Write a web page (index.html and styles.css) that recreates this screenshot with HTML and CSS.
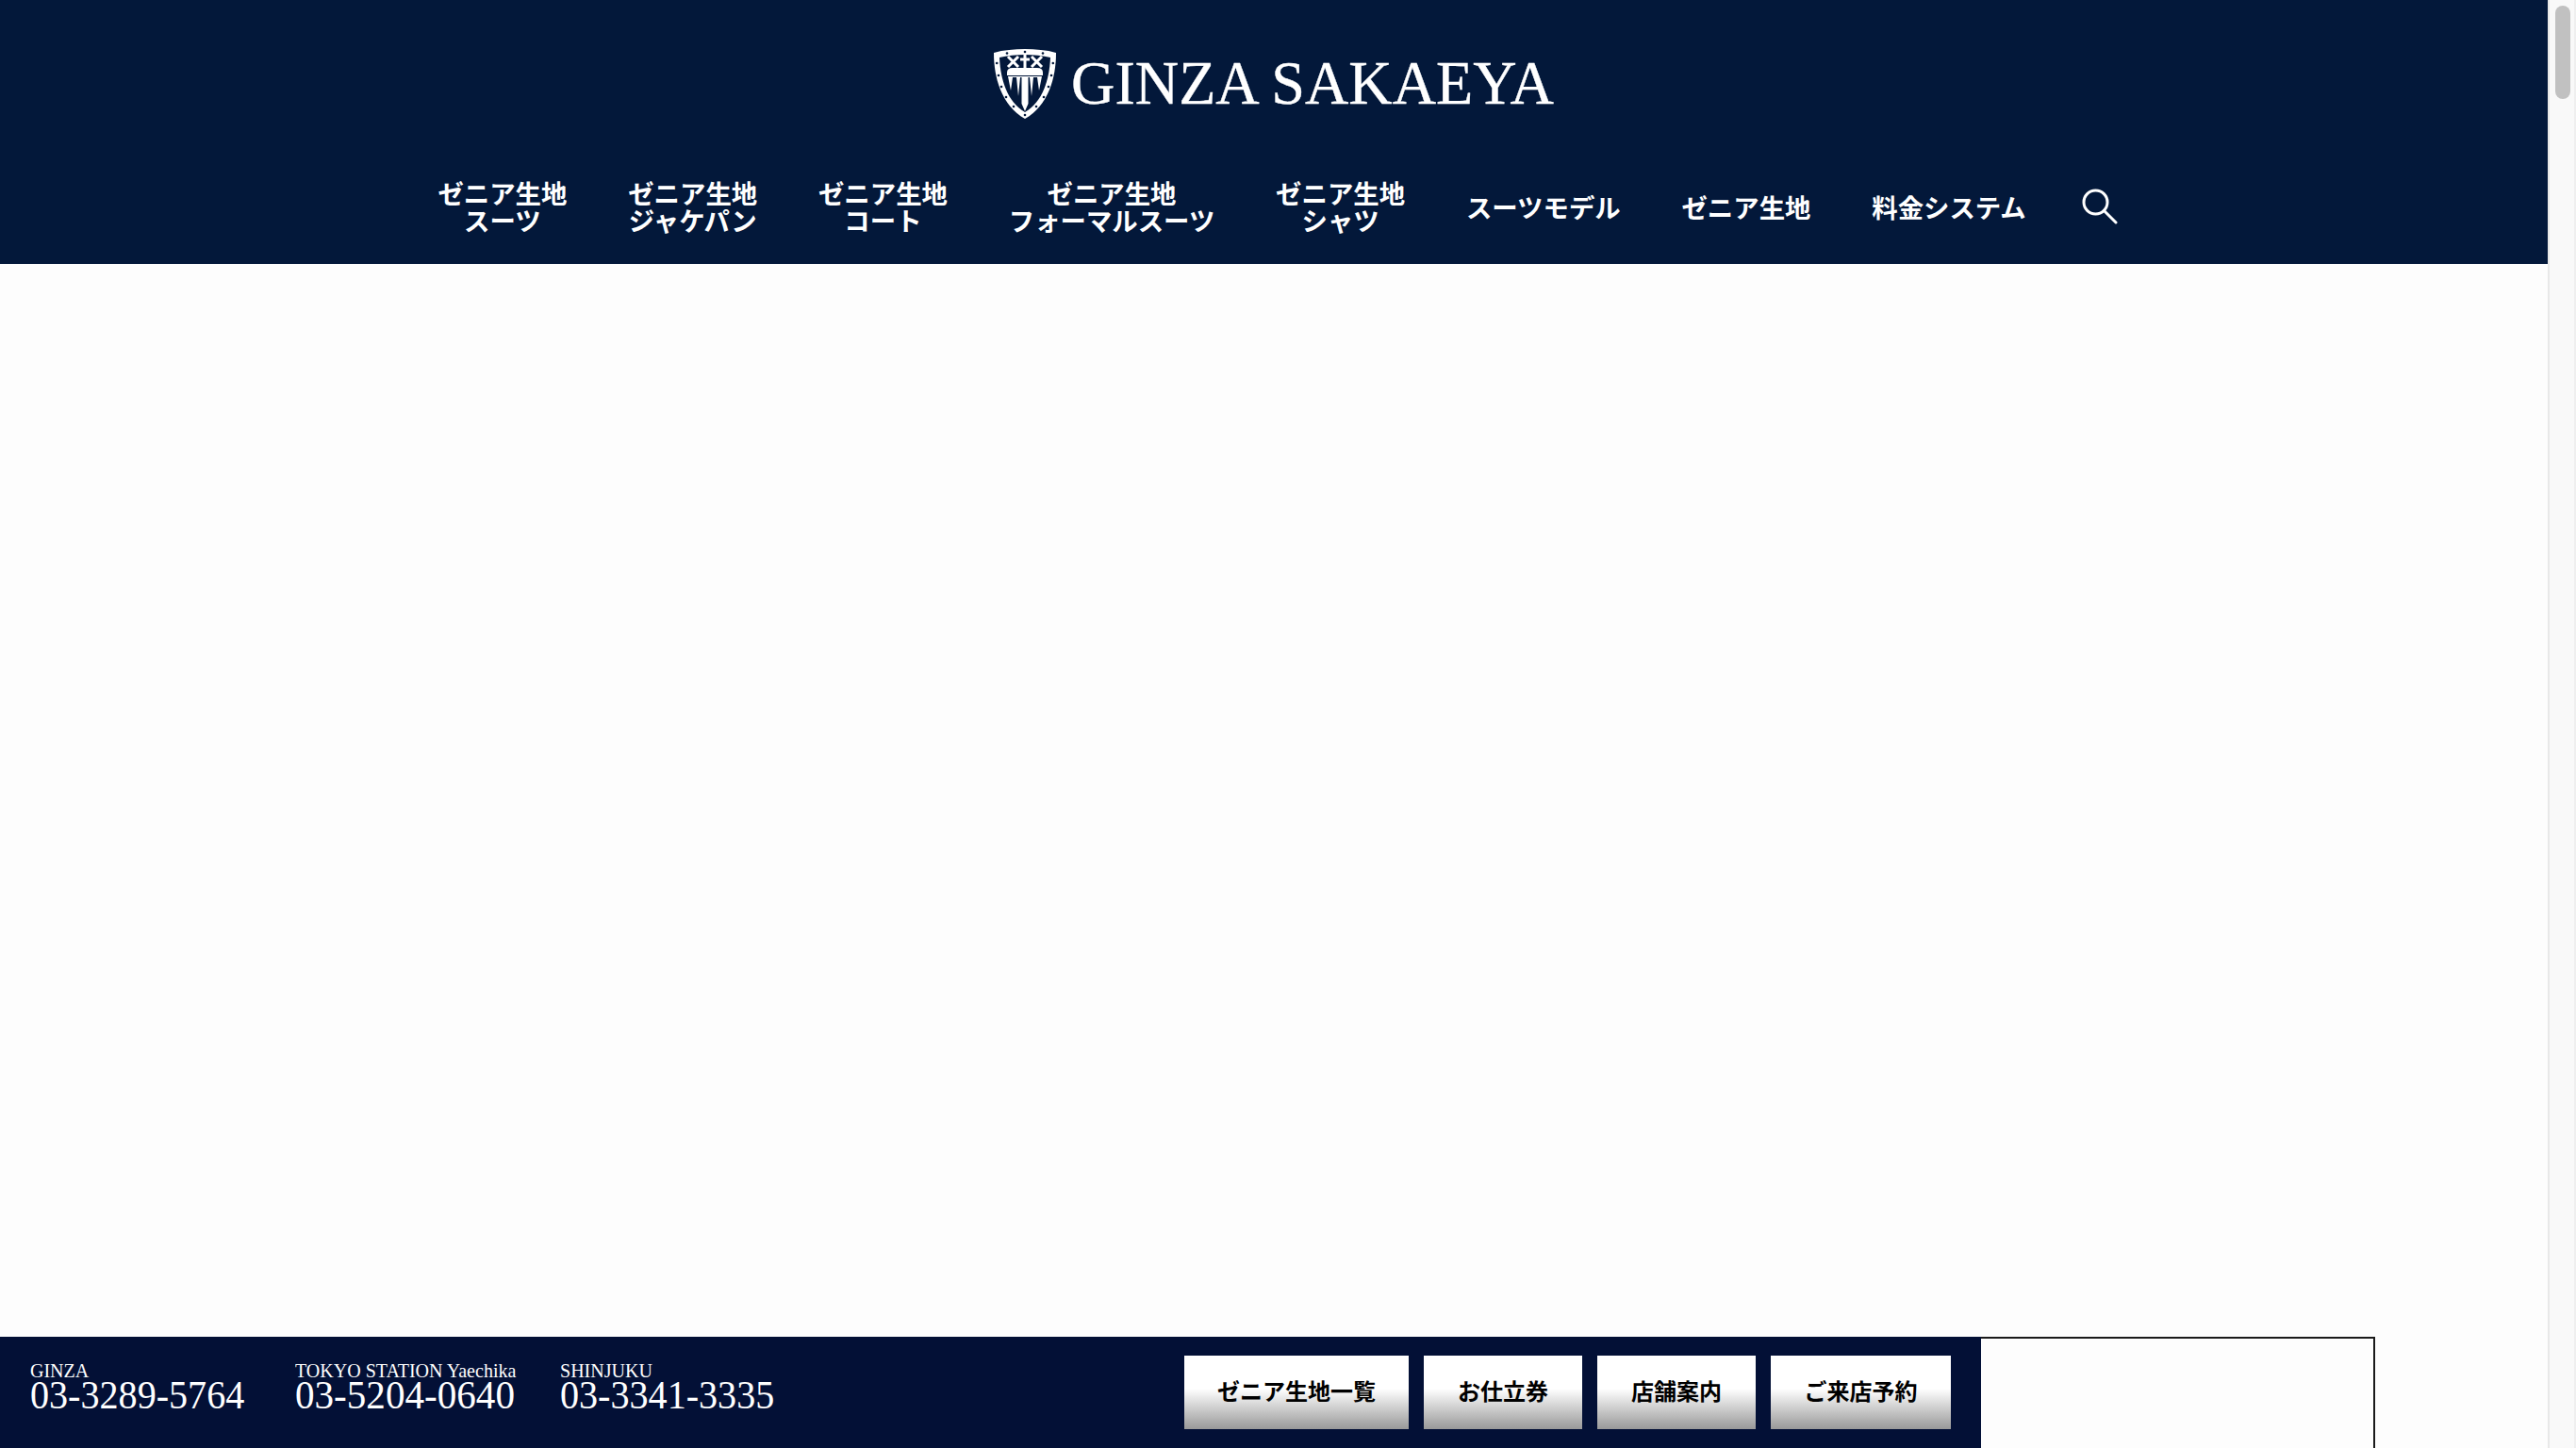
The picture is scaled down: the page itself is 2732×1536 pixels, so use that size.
FILE: index.html
```html
<!DOCTYPE html>
<html lang="ja">
<head>
<meta charset="utf-8">
<title>GINZA SAKAEYA</title>
<link rel="stylesheet" href="styles.css">
</head>
<body>
<div class="page">
  <div class="main">
    <header class="header">
      <a class="logo" href="#">
        <svg class="crest" viewBox="0 0 66 74" aria-hidden="true">
          <path class="crest-outer" d="M33 0C44 0 56 1 66 4C66 30 58 60 33 74C8 60 0 30 0 4C10 1 22 0 33 0Z"/>
          <path class="crest-inner" d="M33 6C42 6 52 7 60 9C59 32 52 56 33 67C14 56 7 32 6 9C14 7 24 6 33 6Z"/>
          <g class="crest-stars">
            <circle cx="14" cy="4.5" r="1.3"/><circle cx="33" cy="3" r="1.3"/><circle cx="52" cy="4.5" r="1.3"/>
            <circle cx="3.2" cy="15" r="1.3"/><circle cx="62.8" cy="15" r="1.3"/>
            <circle cx="5" cy="28" r="1.3"/><circle cx="61" cy="28" r="1.3"/>
            <circle cx="8" cy="40" r="1.3"/><circle cx="58" cy="40" r="1.3"/>
            <circle cx="13" cy="51" r="1.3"/><circle cx="53" cy="51" r="1.3"/>
            <circle cx="21" cy="61" r="1.3"/><circle cx="45" cy="61" r="1.3"/>
            <circle cx="33" cy="70" r="1.3"/>
          </g>
          <path class="crest-lines" d="M15 8L26 19M26 8L15 19M51 8L40 19M40 8L51 19M33 6V20M28 11H38"/>
          <path class="crest-fill" d="M14 25Q14 20 20 20H46Q52 20 52 25V28H14ZM15 29H51L48 44L46 30H42L40 50L38 30H36.5V58L33 66L29.500 58V30H28L26 50L24 30H20L18 44Z"/>
        </svg>
        <span class="logo-text">GINZA SAKAEYA</span>
      </a>
      <nav class="nav">
        <a class="nav-item" href="#">ゼニア生地<br>スーツ</a>
        <a class="nav-item" href="#">ゼニア生地<br>ジャケパン</a>
        <a class="nav-item" href="#">ゼニア生地<br>コート</a>
        <a class="nav-item" href="#">ゼニア生地<br>フォーマルスーツ</a>
        <a class="nav-item" href="#">ゼニア生地<br>シャツ</a>
        <a class="nav-item" href="#">スーツモデル</a>
        <a class="nav-item" href="#">ゼニア生地</a>
        <a class="nav-item" href="#">料金システム</a>
        <a class="search" href="#" aria-label="検索">
          <svg viewBox="0 0 38 38" aria-hidden="true"><circle cx="14.500" cy="14.500" r="12.500"/><path d="M23.500 23.500L36 36"/></svg>
        </a>
      </nav>
    </header>
    <div class="content"></div>
    <footer class="footer">
      <div class="phones">
        <div class="phone"><span class="phone-label">GINZA</span><span class="phone-number">03-3289-5764</span></div>
        <div class="phone"><span class="phone-label">TOKYO STATION Yaechika</span><span class="phone-number phone-number-wide">03-5204-0640</span></div>
        <div class="phone"><span class="phone-label">SHINJUKU</span><span class="phone-number">03-3341-3335</span></div>
      </div>
      <div class="buttons">
        <a class="btn btn-wide" href="#">ゼニア生地一覧</a>
        <a class="btn" href="#">お仕立券</a>
        <a class="btn" href="#">店舗案内</a>
        <a class="btn btn-last" href="#">ご来店予約</a>
      </div>
      <div class="blank-box"></div>
      <div class="footer-gap"></div>
    </footer>
  </div>
  <aside class="scrollbar"><div class="thumb"></div></aside>
</div>
</body>
</html>
```
FILE: styles.css
```css
* { box-sizing: border-box; }
html, body { margin: 0; height: 100%; overflow: hidden; }
body { background: #fdfdfd; font-family: "Liberation Serif", "Noto Sans CJK JP", serif; }
a { text-decoration: none; color: inherit; }
.page { display: flex; height: 1536px; }
.main { flex: 1; min-width: 0; display: flex; flex-direction: column; }
.header { height: 280px; background: #03183a; color: #fff; display: flex; flex-direction: column; align-items: center; padding-top: 52px; }
.logo { display: flex; align-items: center; gap: 16px; height: 74px; }
.crest { width: 66px; height: 74px; display: block; }
.crest-outer { fill: #fff; }
.crest-inner { fill: #03183a; }
.crest-stars { fill: #03183a; }
.crest-lines { fill: none; stroke: #fff; stroke-width: 3; }
.crest-fill { fill: #fff; }
.logo-text { font-size: 66px; line-height: 74px; white-space: nowrap; padding-bottom: 3px; margin-right: -14px; transform: scaleX(0.973); transform-origin: left center; -webkit-text-stroke: 0.4px #fff; }
.nav { display: flex; align-items: center; gap: 64.8px; margin-top: 66px; padding-left: 8px; height: 60px; font-size: 27.4px; line-height: 29px; font-weight: 700; text-align: center; white-space: nowrap; }
.search { display: block; width: 38px; height: 38px; margin: -7px 0 0 -6px; }
.search svg { display: block; width: 38px; height: 38px; fill: none; stroke: #fff; stroke-width: 3; stroke-linecap: round; }
.content { flex: 1; }
.footer { height: 118px; display: flex; align-items: stretch; }
.phones { background: #031036; color: #fff; display: grid; grid-template-columns: 281px 281px auto; align-content: start; padding: 26px 0 0 32px; flex: 0 0 1220px; }
.phone { display: flex; flex-direction: column; align-items: flex-start; }
.phone-label { font-size: 22px; line-height: 20px; white-space: nowrap; transform: scaleX(0.91); transform-origin: left center; }
.phone-number { font-size: 42px; line-height: 32px; white-space: nowrap; transform: scaleX(0.955); transform-origin: left center; }
.phone-number-wide { transform: scaleX(0.979); }
.buttons { background: #031036; display: flex; gap: 16px; padding: 20px 32px 20px 36px; flex: 1; }
.btn { width: 168px; display: flex; align-items: center; justify-content: center; padding-bottom: 6px; background: linear-gradient(#fff 0%, #fff 45%, #999 100%); color: #000; font-size: 24px; font-weight: 700; white-space: nowrap; }
.btn-wide { width: 238px; }
.btn-last { width: 191px; }
.blank-box { flex: 0 0 418px; border-top: 2px solid #1a1a1a; border-right: 2px solid #1a1a1a; background: #fdfdfd; }
.footer-gap { flex: 0 0 183px; }
.scrollbar { flex: 0 0 30px; background: #f9f9f9; border-left: 2px solid #e8e8e8; border-right: 2px solid #efefef; padding: 6px 4px 0 6px; }
.thumb { height: 99px; width: 16px; border-radius: 8px; background: #c1c1c1; }
```
